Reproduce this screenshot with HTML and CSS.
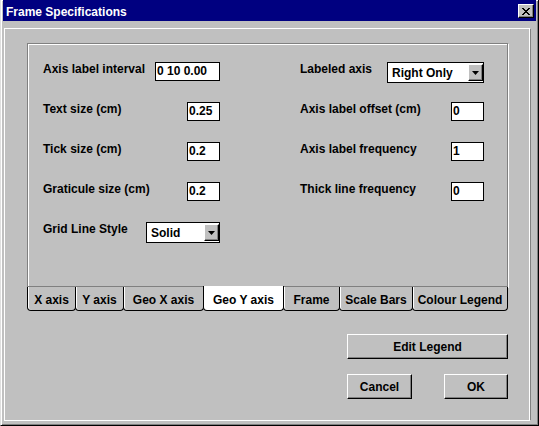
FILE: index.html
```html
<!DOCTYPE html>
<html>
<head>
<meta charset="utf-8">
<title>Frame Specifications</title>
<link rel="stylesheet" href="styles.css">
</head>
<body>
<div class="window">
  <div class="titlebar">
    <span class="title">Frame Specifications</span>
    <div class="close">
      <svg width="8" height="7" viewBox="0 0 8 7"><path d="M0 0h2v1H0zM6 0h2v1H6zM1 1h2v1H1zM5 1h2v1H5zM2 2h4v1H2zM3 3h2v1H3zM2 4h4v1H2zM1 5h2v1H1zM5 5h2v1H5zM0 6h2v1H0zM6 6h2v1H6z" fill="#000"/></svg>
    </div>
  </div>
  <div class="panel">
    <div class="page">
      <div class="form">
        <div class="field"><span class="label">Axis label interval</span><span class="input input-wide">0 10 0.00</span></div>
        <div class="field"><span class="label">Labeled axis</span>
          <span class="select select-axis"><span class="select-text">Right Only</span><span class="drop"><svg width="7" height="4" viewBox="0 0 7 4"><path d="M0 0h7L3.5 4z" fill="#000"/></svg></span></span>
        </div>
        <div class="field"><span class="label">Text size (cm)</span><span class="input">0.25</span></div>
        <div class="field"><span class="label">Axis label offset (cm)</span><span class="input">0</span></div>
        <div class="field"><span class="label">Tick size (cm)</span><span class="input">0.2</span></div>
        <div class="field"><span class="label">Axis label frequency</span><span class="input">1</span></div>
        <div class="field"><span class="label">Graticule size (cm)</span><span class="input">0.2</span></div>
        <div class="field"><span class="label">Thick line frequency</span><span class="input">0</span></div>
        <div class="field"><span class="label">Grid Line Style</span>
          <span class="select select-style"><span class="select-text">Solid</span><span class="drop"><svg width="7" height="4" viewBox="0 0 7 4"><path d="M0 0h7L3.5 4z" fill="#000"/></svg></span></span>
        </div>
      </div>
    </div>
    <div class="tabs">
      <div class="tab tab-x">X axis</div>
      <div class="tab tab-y">Y axis</div>
      <div class="tab tab-geox">Geo X axis</div>
      <div class="tab tab-geoy active">Geo Y axis</div>
      <div class="tab tab-frame">Frame</div>
      <div class="tab tab-scale">Scale Bars</div>
      <div class="tab tab-legend">Colour Legend</div>
    </div>
    <div class="actions">
      <div class="btn btn-edit">Edit Legend</div>
      <div class="btn-row">
        <div class="btn btn-cancel">Cancel</div>
        <div class="btn btn-ok">OK</div>
      </div>
    </div>
  </div>
</div>
</body>
</html>
```
FILE: styles.css
```css
* { box-sizing: border-box; }
html, body { margin: 0; padding: 0; }
body {
  width: 539px;
  height: 426px;
  overflow: hidden;
  background: #c0c0c0;
  font-family: "Liberation Sans", Arial, sans-serif;
  font-weight: bold;
  font-size: 12px;
  color: #000;
}
.window {
  width: 539px;
  height: 426px;
  background: #c0c0c0;
  border: 1px solid;
  border-top: 0;
  border-color: #dfdfdf #000 #000 #dfdfdf;
  box-shadow: inset 1px 1px #fff, inset -1px -1px #808080;
  padding: 0 2px 2px 2px;
  display: flex;
  flex-direction: column;
}
.titlebar {
  height: 21px;
  flex: none;
  background: #000080;
  color: #fff;
  display: flex;
  align-items: center;
  justify-content: space-between;
  padding: 0 2px 0 3px;
}
.title {
  line-height: 14px;
  padding-top: 2px;
}
.close {
  width: 16px;
  height: 14px;
  margin-top: 1px;
  background: #c0c0c0;
  border: 1px solid;
  border-color: #fff #000 #000 #fff;
  box-shadow: inset -1px -1px #808080;
  display: flex;
  align-items: center;
  justify-content: center;
}
.close svg { display: block; }
.panel {
  flex: 1;
  margin: 7px 5px 2px 1px;
  border: 1px solid #fff;
  border-right-color: #808080;
  box-shadow: inset -1px 0 #fff;
  padding: 14px 0 0 22px;
}
.page {
  width: 481px;
  height: 244px;
  border: 1px solid #808080;
  box-shadow: inset 1px 1px #fff, 1px 1px #fff;
  padding: 18px 0 0 15px;
}
.form {
  display: grid;
  grid-template-columns: 177px 184px;
  column-gap: 80px;
  row-gap: 19px;
  grid-auto-rows: 21px;
}
.field {
  display: flex;
  justify-content: space-between;
  align-items: flex-start;
}
.label {
  line-height: 14px;
  white-space: nowrap;
}
.input {
  display: block;
  width: 33px;
  height: 19px;
  background: #fff;
  border: 1px solid #000;
  line-height: 17px;
  padding-left: 1px;
  white-space: nowrap;
}
.input-wide { width: 65px; }
.select {
  display: flex;
  align-items: center;
  height: 21px;
  background: #fff;
  border: 1px solid #000;
}
.select-axis { width: 97px; }
.select-style { width: 74px; }
.select-text {
  flex: 1;
  padding-left: 4px;
  line-height: 14px;
  white-space: nowrap;
}
.drop {
  width: 15px;
  height: 17px;
  background: #c0c0c0;
  border: 1px solid;
  border-color: #fff #000 #000 #fff;
  box-shadow: inset -1px -1px #808080;
  display: flex;
  align-items: center;
  justify-content: center;
}
.drop svg { display: block; }
.tabs {
  display: flex;
  width: 481px;
  height: 24px;
}
.tab {
  height: 24px;
  margin-left: -1px;
  background: #c0c0c0;
  border: 1px solid #000;
  border-top: 0;
  border-radius: 0 0 4px 4px;
  box-shadow: inset 1px 0 #fff;
  text-align: center;
  padding-top: 3px;
  line-height: 20px;
  white-space: nowrap;
}
.tab-x { margin-left: 0; width: 49px; }
.tab-y { width: 49px; }
.tab-geox { width: 81px; }
.tab-geoy { width: 81px; }
.tab-frame { width: 57px; }
.tab-scale { width: 74px; }
.tab-legend { width: 96px; }
.tab.active {
  background: #fff;
  box-shadow: none;
  margin-top: -1px;
  height: 25px;
  padding-top: 4px;
  z-index: 1;
}
.actions {
  width: 481px;
  margin-top: 23px;
  display: flex;
  flex-direction: column;
  align-items: flex-end;
  gap: 15px;
}
.btn-row {
  display: flex;
  gap: 32px;
}
.btn {
  height: 25px;
  background: #c0c0c0;
  border: 1px solid;
  border-color: #fff #000 #000 #fff;
  box-shadow: inset -1px -1px #808080;
  display: flex;
  align-items: center;
  justify-content: center;
  white-space: nowrap;
}
.btn-edit { width: 161px; }
.btn-cancel { width: 65px; }
.btn-ok { width: 64px; }
```
